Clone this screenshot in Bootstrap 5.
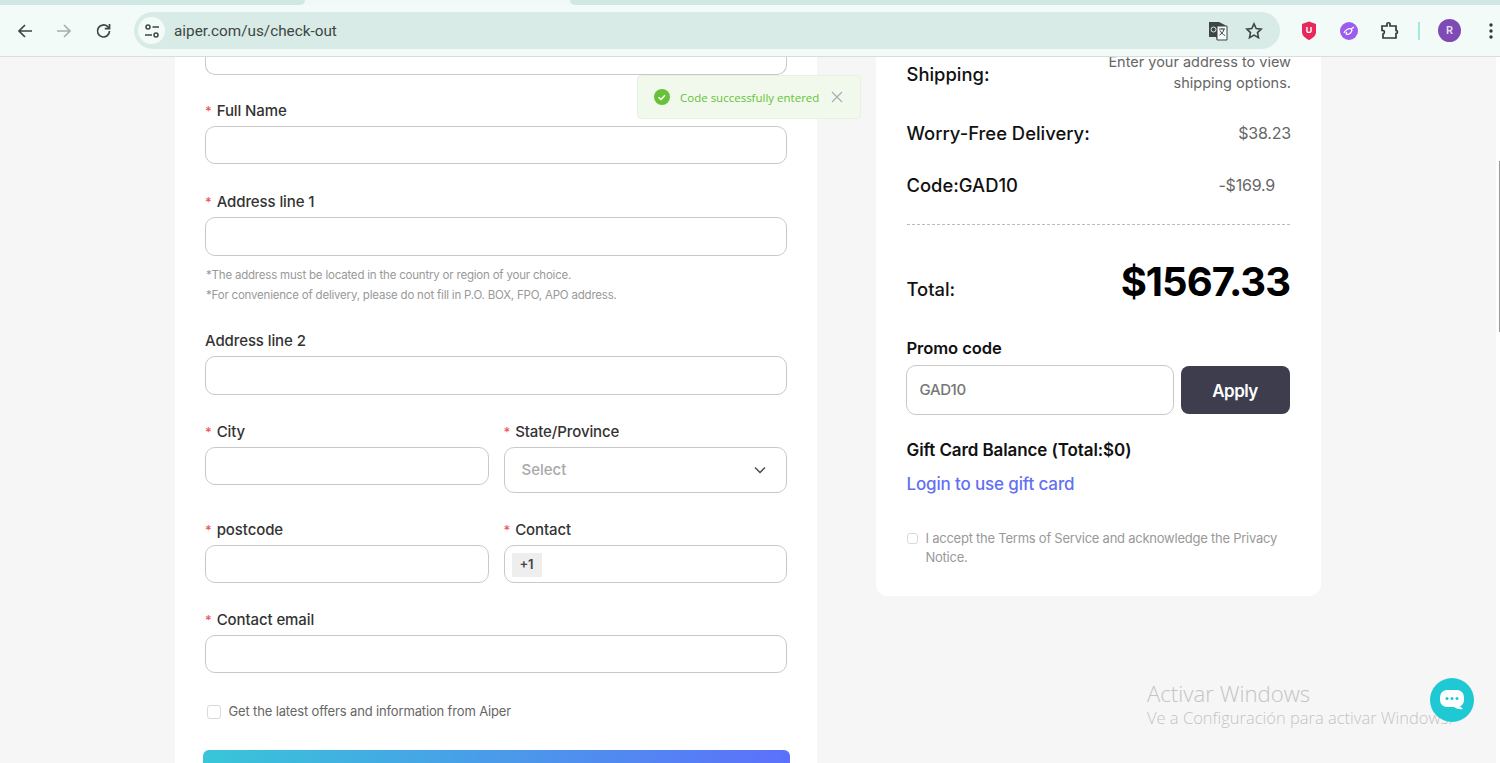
<!DOCTYPE html>
<html lang="en"><head><meta charset="utf-8"><title>Aiper check-out</title>
<link rel="stylesheet" href="https://cdn.jsdelivr.net/npm/bootstrap@5.3.0/dist/css/bootstrap.min.css">
<style>
html,body{height:763px;overflow:hidden}
body{background:#f6f6f6;font-family:Inter,"Liberation Sans",sans-serif;color:#333;position:relative}
.tabstrip{height:5px;background:#f0f9f7}
.tabpiece{background:#cfe8e3;height:5px}
.tp1{width:305px;border-radius:0 0 8px 0}.tp2{flex:1;margin-left:265px;border-radius:0 0 0 8px}
.toolbar{height:52px;background:#f3fbf9;border-bottom:1px solid #d9dedd;padding:7px 0 0 0}
.navic{width:18px;height:18px;flex:none}
.navs{padding-left:16px;gap:21px;width:134px;height:37px;flex:none}
.omni{width:1146px;height:37px;border-radius:19px;background:#d9ebe6;padding:0 17px 0 4px;flex:none}
.sitebtn{width:27px;height:27px;border-radius:50%;background:#f3fbf9;flex:none}
.urlt{font:15.3px "Roboto",sans-serif;color:#3c4643;margin-left:9px}
.transl{margin-right:17px}
.exts{padding-left:21px;flex:1;height:37px}
.avat{width:23px;height:23px;border-radius:50%;background:#7d4bb3;color:#e8dcf4;font:600 11px Roboto,sans-serif;margin-left:18px}
.divi{width:2px;height:18px;background:#a5e8df;margin-left:18px}
.ext2{margin-left:23px}.ext3{margin-left:22px}.dots{margin-left:28px}
.pagearea{height:707px;overflow:hidden;padding-left:175px;gap:59px;align-items:flex-start}
.formcol{width:642px;height:707px;background:#fff;padding:0 30px;flex:none;overflow:hidden}
.ftext{font-size:15px;font-weight:500;color:#333;letter-spacing:-.1px;line-height:20px;margin-bottom:5px}
.star{color:#f0555a;margin-right:5px;font-size:13px}
.fbox{height:38px;border:1px solid #c9c9c9;border-radius:10px;background:#fff}
.fboxl{height:39px}
.stub{height:18px;border-top:0;border-radius:0 0 10px 10px;margin-bottom:26px}
.blk{margin-bottom:28px}
.blk2{margin:26px 0 27px}
.pairrow{gap:15px;margin-bottom:27px}
.notes{font-size:11.5px;color:#999;line-height:20px;margin-top:9px;padding-left:1px;letter-spacing:-.2px}
.tall{height:46px}
.selp{color:#a9a9a9;font-size:15px;font-weight:500;padding:0 20px 0 17px}
.pre{background:#eee;font-size:13px;font-weight:600;width:30px;height:24px;margin:1px 0 0 7px;color:#444}
.chkb{width:14px;height:14px;border:1px solid #d9d9d9;border-radius:3px;background:#fff;flex:none}
.optin{font-size:13px;color:#666;letter-spacing:-.15px;margin:29px 0 28px 1.500px}
.gobtn{height:40px;margin:0 -3px 0 -2px;width:587px;border-radius:6px;background:linear-gradient(90deg,#38c6d8,#5c70fb)}
.sumcard{width:445px;height:539px;background:#fff;border-radius:0 0 12px 12px;padding:0 30px 0 30.5px;flex:none;color:#111;overflow:hidden}
.slabel{font-size:18.4px;font-weight:500;color:#111;letter-spacing:0}
.slow{margin-top:2px}
.sval{font-size:16px;color:#666;letter-spacing:-.2px}
.shipv{font-size:14.5px;line-height:21px;text-align:right;color:#666;margin-top:-6px}
.r1{height:44px}.r2{height:64px}.r3{height:40px}
.rule{border-top:1px dashed #bbb;margin:18.500px 1px 0 0}
.totalr{margin-top:31px;height:56px}
.totlab{margin-top:12px}
.bigsum{font-size:40px;font-weight:700;color:#000;letter-spacing:-1px;line-height:52px;margin:0 1px 4px 0}
.phead{font-size:16.6px;font-weight:600;color:#111;line-height:20px;letter-spacing:-.1px}
.promohd{margin:26px 0 7px}
.pfield{width:268px;height:50px;margin-left:-1px;border:1px solid #c9c9c9;border-radius:10px;padding:2px 0 0 13px;color:#777;font-size:15px;font-weight:500;letter-spacing:-.4px}
.promor{gap:7px}
.applyb{width:109px;height:48px;background:#3e3d4d;color:#fff;border:0;border-radius:8px;font-size:17px;font-weight:600;letter-spacing:-.5px;padding-top:6px}
.gifthd{margin-top:25px;font-size:17px}
.loginrow{margin-top:12px;line-height:24px}
.loginl{font-size:17px;font-weight:500;color:#6370f2;text-decoration:none;letter-spacing:-.15px}
.terms{font-size:13px;line-height:19px;color:#999;letter-spacing:-.24px;gap:8px;margin-top:33px}
.tchk{width:11px;height:11px;margin-top:4px}
.toastbx{position:absolute;left:637px;top:75px;width:224px;height:44px;background:#f0f9eb;border:1px solid #e6f3df;border-radius:4px;padding-left:16px;color:#67c23a;font-size:11.5px;font-family:"Open Sans",sans-serif}
.toastt{margin:2px 0 0 10px}
.toastx{margin-left:12px}
.wm{position:absolute;left:1147px;top:680px;color:#c4c4c4;font-family:"Open Sans",sans-serif;font-weight:300}
.wm1{font-size:22.2px;line-height:27px}.wm2{font-size:16.5px;line-height:22px;white-space:nowrap;width:330px}
.chatb{position:absolute;left:1430px;top:678px;width:44px;height:44px;border-radius:50%;background:#1ec9d3}
.sbar{position:absolute;right:0;top:57px;width:4px;height:706px;background:#fff}
.sthumb{position:absolute;right:0;top:104px;width:1px;height:171px;background:#9a9a9a}
</style></head><body>
<div class="tabstrip d-flex"><div class="tabpiece tp1"></div><div class="tabpiece tp2"></div></div>
<div class="toolbar d-flex align-items-start">
 <div class="navs d-flex align-items-center">
  <svg class="navic" viewBox="0 0 18 18" fill="none" stroke="#3c4643" stroke-width="1.7"><path d="M16 9H3M9 3 3 9l6 6"/></svg>
  <svg class="navic" viewBox="0 0 18 18" fill="none" stroke="#a7afac" stroke-width="1.7"><path d="M2 9h13M9 3l6 6-6 6"/></svg>
  <svg class="navic" viewBox="0 0 18 18" fill="none" stroke="#3c4643" stroke-width="1.7"><path d="M15.500 9a6 6 0 1 1-1.800-4.300L15.500 6.500"/><path d="M15.500 2v4.700h-4.700"/></svg>
 </div>
 <div class="omni d-flex align-items-center">
  <div class="sitebtn d-flex align-items-center justify-content-center"><svg width="16" height="16" viewBox="0 0 16 16" fill="none" stroke="#3c4643" stroke-width="1.5"><circle cx="4" cy="4" r="2"/><path d="M8.500 4H15M1 12h7"/><circle cx="12" cy="12" r="2"/></svg></div>
  <span class="urlt flex-grow-1">aiper.com/us/check-out</span>
  <svg width="20" height="20" viewBox="0 0 20 20" class="transl"><path d="M1 1h10l6 3v15H9l-1-3H1z" fill="#3c4643"/><path d="M9 5h10v14H9z" fill="#f3fbf9" stroke="#3c4643"/><path d="M11 8h6M14 7v1M16 8c-.5 3-2.500 5-4.500 6M12 9.500c1 2 3 4 5 5" stroke="#3c4643" fill="none"/><circle cx="5.500" cy="8.500" r="2.500" fill="none" stroke="#d9ebe6"/></svg>
  <svg width="18" height="18" viewBox="0 0 18 18" fill="none" stroke="#3c4643" stroke-width="1.6"><path d="M9 1.800l2.200 4.700 5 .6-3.700 3.500 1 5L9 13.100l-4.500 2.500 1-5L1.800 7.100l5-.6z"/></svg>
 </div>
 <div class="exts d-flex align-items-center">
  <svg width="16" height="19" viewBox="0 0 16 19"><path d="M1 3l7-2.500L15 3v8c0 4-4 6.500-7 8-3-1.500-7-4-7-8z" fill="#e8275b"/><text x="8" y="12" font-size="9" font-weight="700" fill="#fff" text-anchor="middle" font-family="Liberation Sans">U</text></svg>
  <svg width="18" height="18" viewBox="0 0 18 18" class="ext2"><circle cx="9" cy="9" r="9" fill="#9b5cf0"/><path d="M4 11c1-3 5-5 7-4s0 4-2 5-4 0-2-2M11 7l3-2" fill="none" stroke="#fff" stroke-width="1.300"/></svg>
  <svg width="20" height="20" viewBox="0 0 20 20" fill="none" stroke="#2f3a37" stroke-width="1.700" class="ext3"><path d="M2 5h5V2.500c0-1 3-1 3 0V5h6v4.500c2 0 2 3 0 3V17H3v-4c1.500 0 2-3.500 0-3.500-.5 0-1 0-1 0z"/></svg>
  <div class="divi"></div>
  <div class="avat d-flex align-items-center justify-content-center">R</div>
  <svg width="4" height="16" viewBox="0 0 4 16" class="dots" fill="#2f3a37"><circle cx="2" cy="2" r="1.700"/><circle cx="2" cy="8" r="1.700"/><circle cx="2" cy="14" r="1.700"/></svg>
 </div>
</div>

<div class="pagearea d-flex">
 <div class="formcol">
  <div class="fbox stub"></div>
  <div class="blk"><div class="ftext"><span class="star">*</span>Full Name</div><div class="fbox"></div></div>
  <div><div class="ftext"><span class="star">*</span>Address line 1</div><div class="fbox fboxl"></div>
   <div class="notes">*The address must be located in the country or region of your choice.<br>*For convenience of delivery, please do not fill in P.O. BOX, FPO, APO address.</div></div>
  <div class="blk2"><div class="ftext">Address line 2</div><div class="fbox fboxl"></div></div>
  <div class="d-flex pairrow">
   <div class="flex-fill w-50"><div class="ftext"><span class="star">*</span>City</div><div class="fbox"></div></div>
   <div class="flex-fill w-50"><div class="ftext"><span class="star">*</span>State/Province</div><div class="fbox tall selp d-flex align-items-center justify-content-between"><span>Select</span><svg width="12" height="8" viewBox="0 0 12 8" fill="none" stroke="#444" stroke-width="1.300"><path d="M1 1.500l5 5 5-5"/></svg></div></div>
  </div>
  <div class="d-flex pairrow">
   <div class="flex-fill w-50"><div class="ftext"><span class="star">*</span>postcode</div><div class="fbox"></div></div>
   <div class="flex-fill w-50"><div class="ftext"><span class="star">*</span>Contact</div><div class="fbox d-flex align-items-center"><div class="pre d-flex align-items-center justify-content-center">+1</div></div></div>
  </div>
  <div><div class="ftext"><span class="star">*</span>Contact email</div><div class="fbox"></div></div>
  <div class="optin d-flex align-items-center gap-2"><span class="chkb"></span><span>Get the latest offers and information from Aiper</span></div>
  <div class="gobtn"></div>
 </div>

 <div class="sumcard">
  <div class="d-flex justify-content-between r1"><span class="slabel" style="margin-top:4px">Shipping:</span><div class="shipv">Enter your address to view<br>shipping options.</div></div>
  <div class="d-flex justify-content-between r2 align-items-center"><span class="slabel slow">Worry-Free Delivery:</span><span class="sval">$38.23</span></div>
  <div class="d-flex justify-content-between r3 align-items-center"><span class="slabel slow">Code:GAD10</span><span class="sval me-3">-$169.9</span></div>
  <div class="rule"></div>
  <div class="d-flex justify-content-between totalr align-items-center"><span class="slabel totlab">Total:</span><span class="bigsum">$1567.33</span></div>
  <div class="phead promohd">Promo code</div>
  <div class="d-flex promor align-items-center"><div class="pfield d-flex align-items-center">GAD10</div><button class="applyb" type="button">Apply</button></div>
  <div class="phead gifthd">Gift Card Balance (Total:$0)</div>
  <div class="loginrow"><a class="loginl" href="#">Login to use gift card</a></div>
  <div class="terms d-flex"><span class="chkb tchk"></span><span>I accept the Terms of Service and acknowledge the Privacy Notice.</span></div>
 </div>
</div>

<div class="toastbx d-flex align-items-center">
 <svg width="16" height="16" viewBox="0 0 16 16"><circle cx="8" cy="8" r="8" fill="#67c23a"/><path d="M4.500 8.200l2.500 2.300 4-4.300" fill="none" stroke="#fff" stroke-width="1.500"/></svg>
 <span class="toastt">Code successfully entered</span>
 <svg width="12" height="12" viewBox="0 0 12 12" class="toastx" fill="none" stroke="#a8abb2" stroke-width="1.100"><path d="M1 1l10 10M11 1 1 11"/></svg>
</div>
<div class="wm"><div class="wm1">Activar Windows</div><div class="wm2">Ve a Configuración para activar Windows.</div></div>
<div class="chatb d-flex align-items-center justify-content-center"><svg width="26" height="26" viewBox="0 0 26 26"><path d="M8 3h10a7 7 0 0 1 7 7v3a7 7 0 0 1-4 6.300l3 2.700c-3 .5-6 0-9-2H8a7 7 0 0 1-7-7v-3a7 7 0 0 1 7-7z" fill="#fff"/><circle cx="8" cy="11.500" r="1.500" fill="#1ec9d3"/><circle cx="13" cy="11.500" r="1.500" fill="#1ec9d3"/><circle cx="18" cy="11.500" r="1.500" fill="#1ec9d3"/></svg></div>
<div class="sbar"><div class="sthumb"></div></div>
<script src="https://cdn.jsdelivr.net/npm/bootstrap@5.3.0/dist/js/bootstrap.bundle.min.js"></script>
</body></html>
